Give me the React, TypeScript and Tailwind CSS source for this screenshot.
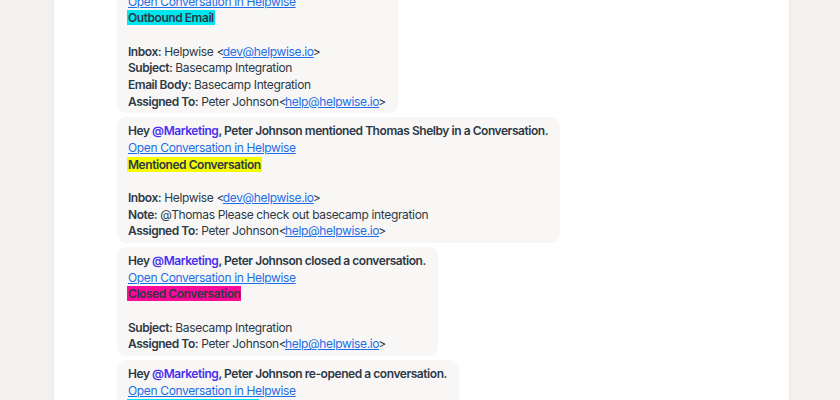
import React from "react";

const Mention = () => <span className="text-[#4b2ff0]">@Marketing</span>;
const Link = ({ children }: { children: React.ReactNode }) => (
  <a className="text-[#1d6ee6] underline font-normal tracking-[-0.35px]">{children}</a>
);
const Label = ({ children }: { children: React.ReactNode }) => (
  <span className="font-semibold tracking-[-0.45px]">{children}</span>
);
const Mark = ({ color, children }: { color: string; children: React.ReactNode }) => (
  <span className={`${color} ml-[-1px] px-[1px] font-semibold tracking-[-0.45px]`}>{children}</span>
);
const Head = ({ children }: { children: React.ReactNode }) => (
  <div className="font-semibold tracking-[-0.45px]">{children}</div>
);
const Lt = () => <span className="tracking-[-1.6px]">&lt;</span>;
const Gt = () => <span className="ml-[-1px]">&gt;</span>;

const Bubble = ({ children }: { children: React.ReactNode }) => (
  <div className="self-start rounded-[9px] bg-[#f8f7f6] pt-[6px] pb-[3px] pl-[11px] pr-[12px]">{children}</div>
);

export default function App() {
  return (
    <div
      className="flex h-[400px] w-[840px] overflow-hidden bg-[#f4f0ed] text-[12px] leading-[16.67px] tracking-[-0.35px] text-[#2d3946]"
      style={{ fontFamily: "Inter, 'Liberation Sans', sans-serif" }}
    >
      <div className="ml-[54px] h-full w-[735px] bg-white shadow-[0_0_3px_rgba(0,0,0,0.06)]">
        <div className="mt-[-29px] flex flex-col gap-[4px] pl-[63px]">
          <Bubble>
            <Head>
              Hey <Mention />, Peter Johnson sent an email.
            </Head>
            <div><Link>Open Conversation in Helpwise</Link></div>
            <div><Mark color="bg-[#00e6ef]">Outbound Email</Mark></div>
            <div>&nbsp;</div>
            <div><Label>Inbox:</Label> Helpwise <Lt /><Link>dev@helpwise.io</Link><Gt /></div>
            <div><Label>Subject:</Label> Basecamp Integration</div>
            <div><Label>Email Body:</Label> Basecamp Integration</div>
            <div><Label>Assigned To:</Label> Peter Johnson<Lt /><Link>help@helpwise.io</Link><Gt /></div>
          </Bubble>
          <Bubble>
            <Head>
              Hey <Mention />, Peter Johnson mentioned Thomas Shelby in a Conversation.
            </Head>
            <div><Link>Open Conversation in Helpwise</Link></div>
            <div><Mark color="bg-[#f5fb00]">Mentioned Conversation</Mark></div>
            <div>&nbsp;</div>
            <div><Label>Inbox:</Label> Helpwise <Lt /><Link>dev@helpwise.io</Link><Gt /></div>
            <div><Label>Note:</Label> @Thomas Please check out basecamp integration</div>
            <div><Label>Assigned To:</Label> Peter Johnson<Lt /><Link>help@helpwise.io</Link><Gt /></div>
          </Bubble>
          <Bubble>
            <Head>
              Hey <Mention />, Peter Johnson closed a conversation.
            </Head>
            <div><Link>Open Conversation in Helpwise</Link></div>
            <div><Mark color="bg-[#ff0a98]">Closed Conversation</Mark></div>
            <div>&nbsp;</div>
            <div><Label>Subject:</Label> Basecamp Integration</div>
            <div><Label>Assigned To:</Label> Peter Johnson<Lt /><Link>help@helpwise.io</Link><Gt /></div>
          </Bubble>
          <Bubble>
            <Head>
              Hey <Mention />, Peter Johnson re-opened a conversation.
            </Head>
            <div><Link>Open Conversation in Helpwise</Link></div>
            <div><Mark color="bg-[#00e6ef]">Reopened Conversation</Mark></div>
            <div>&nbsp;</div>
            <div><Label>Subject:</Label> Basecamp Integration</div>
          </Bubble>
        </div>
      </div>
    </div>
  );
}
